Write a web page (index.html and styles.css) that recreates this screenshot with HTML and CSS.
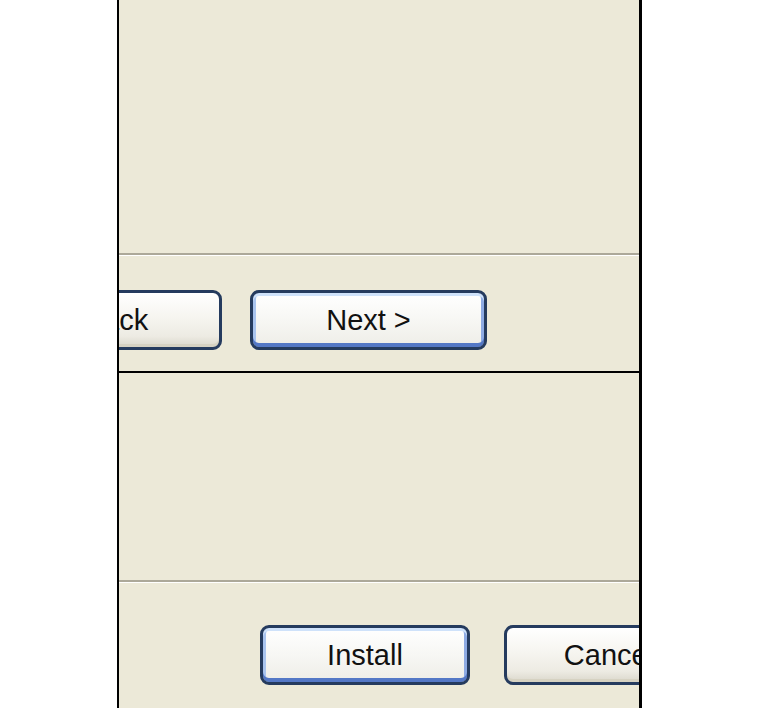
FILE: index.html
```html
<!DOCTYPE html>
<html>
<head>
<meta charset="utf-8">
<link rel="stylesheet" href="styles.css">
</head>
<body>
<div class="frame">
  <section class="panel top">
    <div class="content top-content"></div>
    <div class="sep"></div>
    <div class="row top-row">
      <button class="btn back">&lt; Back</button>
      <button class="btn default">Next &gt;</button>
    </div>
  </section>
  <div class="divider"></div>
  <section class="panel bottom">
    <div class="content bottom-content"></div>
    <div class="sep"></div>
    <div class="row bottom-row">
      <button class="btn default wide">Install</button>
      <button class="btn wide">Cancel</button>
    </div>
  </section>
</div>
</body>
</html>
```
FILE: styles.css
```css
html, body {
  margin: 0;
  padding: 0;
  background: #ffffff;
  height: 708px;
  overflow: hidden;
}
.frame {
  margin-left: 117px;
  width: 525px;
  height: 708px;
  box-sizing: border-box;
  border-left: 2px solid #000;
  border-right: 3px solid #000;
  background: #ECE9D8;
  overflow: hidden;
  display: flex;
  flex-direction: column;
}
.panel {
  display: flex;
  flex-direction: column;
  overflow: hidden;
}
.top { height: 371px; flex: none; }
.bottom { flex: 1; }
.divider {
  height: 2px;
  background: #000;
  flex: none;
}
.top-content { height: 253px; flex: none; }
.bottom-content { height: 207px; flex: none; }
.sep {
  flex: none;
  height: 0;
  border-top: 2px solid #ACA899;
  border-bottom: 1px solid #FFFFFF;
}
.row {
  display: flex;
  flex: none;
}
.top-row {
  padding-top: 34px;
  gap: 28px;
}
.bottom-row {
  padding-top: 42px;
  padding-left: 141px;
  gap: 34px;
}
.btn {
  flex: none;
  box-sizing: border-box;
  width: 237px;
  height: 60px;
  border: 3px solid #253B5E;
  border-radius: 9px;
  background: linear-gradient(to bottom, #FFFFFF 0%, #F6F5F0 45%, #EDEBE3 80%, #DAD7CB 100%);
  box-shadow: inset 0 -3px 0 #D6D2C2;
  font-family: "Liberation Sans", Arial, sans-serif;
  font-size: 29px;
  color: #111;
  padding: 0;
  display: flex;
  align-items: center;
  justify-content: center;
}
.back { margin-left: -134px; }
.default {
  background: linear-gradient(to bottom, #FFFFFF 0%, #F7F7F4 50%, #EEEDE7 100%);
  box-shadow:
    inset 0 3px 0 #CFE2FA,
    inset 0 -4px 0 #5478C6,
    inset 3px 0 0 #A9C4EE,
    inset -3px 0 0 #8EABE3;
}
.wide { width: 210px; }
```
